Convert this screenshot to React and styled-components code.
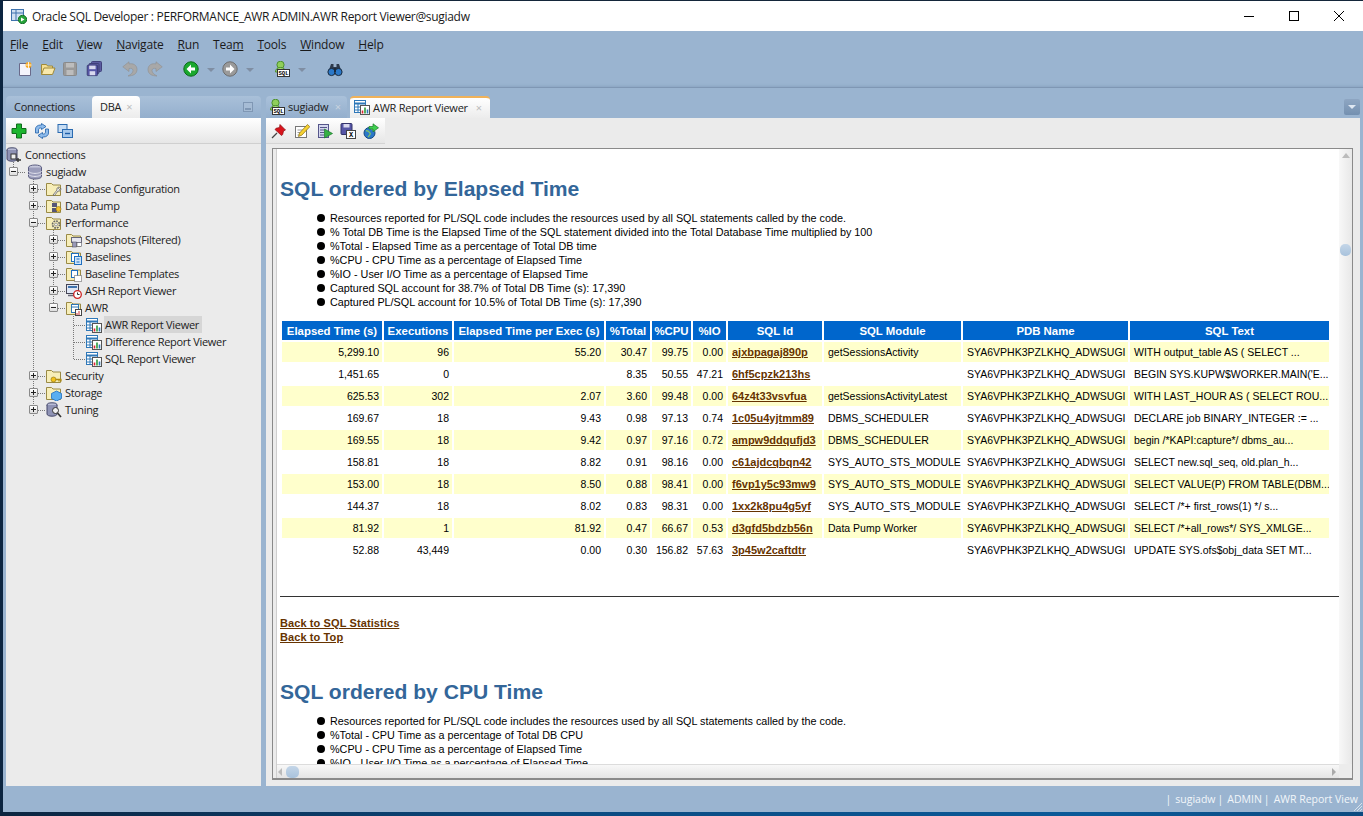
import React from 'react';
import styled, { createGlobalStyle } from 'styled-components';

const GlobalStyle = createGlobalStyle`
  html, body { margin: 0; padding: 0; background: #0b2239; overflow: hidden; }
  * { box-sizing: border-box; }
`;

const uiFont = `"Open Sans", "Noto Sans", "Liberation Sans", sans-serif`;
const reportFont = `"Liberation Sans", Arial, sans-serif`;

const Window = styled.div`
  width: 1363px; height: 816px;
  display: flex; flex-direction: column;
  background: #9ab4d0;
  border-top: 1px solid #14263a;
  border-left: 3px solid #0c2540;
  font-family: ${uiFont};
  overflow: hidden;
`;
const TitleBar = styled.div`
  height: 30px; flex: none; background: #fff;
  display: flex; align-items: center;
  padding-left: 8px; gap: 5px;
  font-size: 12px; color: #1a1a1a;
`;
const TitleText = styled.span` flex: 1; letter-spacing: -0.31px; `;
const WinButtons = styled.div` display: flex; gap: 30px; padding-right: 16px; `;
const MenuBar = styled.div`
  height: 27px; flex: none; display: flex; align-items: center;
  padding: 0 0 0 7px; gap: 14px;
  font-size: 12px; color: #1a1a1a;
  letter-spacing: -0.2px;
`;
const ToolBar = styled.div`
  height: 30px; flex: none; display: flex; align-items: center;
  padding: 0 0 8px 14px;
  border-bottom: 1px solid #7f97b4;
  box-shadow: inset 0 -3px 3px -2px #8aa4c2;
`;
const ToolGap = styled.span` display: inline-block; width: ${p => p.$w}px; flex: none; `;
const Drop = styled.span`
  width: 0; height: 0; flex: none;
  border-left: 4px solid transparent; border-right: 4px solid transparent;
  border-top: 4px solid #7f8ea3;
  margin-top: 2px;
`;
const Workspace = styled.div`
  flex: 1; min-height: 0;
  display: flex; gap: 5px;
  padding: 8px 3px 0 3px;
`;
const LeftColumn = styled.div` width: 255px; display: flex; flex-direction: column; `;
const RightColumn = styled.div` flex: 1; min-width: 0; display: flex; flex-direction: column; `;
const TabStrip = styled.div`
  height: 22px; flex: none; display: flex; align-items: stretch;
  font-size: 11px; color: #222;
  ${p => p.$light && 'background: linear-gradient(#a9c0d9, #94afcd); border-radius: 4px 4px 0 0;'}
`;
const Tab = styled.div`
  display: flex; align-items: center; gap: ${p => p.$gap ?? 7}px;
  padding: ${p => p.$pad || '0 8px 1px'};
  width: ${p => p.$w}px;
  white-space: nowrap;
  border-radius: 4px 4px 0 0;
  background: ${p => p.$active ? 'linear-gradient(#fff, #ececec)' : 'transparent'};
  ${p => p.$orange && 'border-top: 2px solid #f0b25a;'}
  ${p => p.$bar && 'background: linear-gradient(#aac1da, #94afcd);'}
`;
const TabLabel = styled.span` letter-spacing: -0.25px; `;
const TabClose = styled.span`
  color: ${p => p.$dark ? '#bbb' : '#c8d3df'};
  font-size: 11px; line-height: 1; margin-left: auto;
`;
const Spacer = styled.div` flex: 1; `;
const MinBtn = styled.span`
  align-self: center; margin-right: 8px;
  width: 10px; height: 10px;
  border: 1px solid #7f97b4; background: #a6bcd5;
  display: flex; align-items: flex-end; justify-content: center;
  padding-bottom: 1px;
  &::after { content: ''; width: 6px; height: 2px; background: #7f97b4; }
`;
const DropBtn = styled.span`
  align-self: center; width: 16px; height: 16px; margin-top: -1px;
  border-radius: 2px;
  background: linear-gradient(#8ea6c2, #7490b0);
  display: flex; align-items: center; justify-content: center;
  &::after {
    content: ''; width: 0; height: 0;
    border-left: 4px solid transparent; border-right: 4px solid transparent;
    border-top: 4px solid #dfe8f2;
  }
`;
const Panel = styled.div`
  flex: 1; min-height: 0; background: #ebebeb;
  display: flex; flex-direction: column;
`;
const LeftBar = styled.div`
  height: 26px; flex: none; display: flex; align-items: center;
  gap: 7px; padding: 0 0 0 5px;
  background: linear-gradient(#fff, #e6e6e6);
  border-bottom: 1px solid #cfcfcf;
`;
const Tree = styled.div`
  position: relative; padding-top: 2px;
  font-size: 11px; color: #222;
`;
const TreeLines = styled.svg`
  position: absolute; left: 0; top: 0; pointer-events: none;
`;
const Row = styled.div`
  position: relative; height: 17px;
  display: flex; align-items: center;
  padding-left: ${p => p.$indent}px;
`;
const Expander = styled.span`
  width: 9px; height: 9px; flex: none; margin-right: ${p => p.$mr}px;
  border: 1px solid #8a8a8a; border-radius: 1px;
  background: linear-gradient(#fff, #ddd);
  position: relative;
  &::before { content: ''; position: absolute; left: 1px; right: 1px; top: 3px; height: 1px; background: #222; }
  ${p => p.$plus && `&::after { content: ''; position: absolute; top: 1px; bottom: 1px; left: 3px; width: 1px; background: #222; }`}
`;
const RowLabel = styled.span`
  margin-left: 2px; padding: 0 3px 0 1px; height: 17px; line-height: 17px;
  letter-spacing: -0.3px;
  ${p => p.$sel && 'background: #d6d6d6;'}
`;
const RightBar = styled.div`
  height: 26px; flex: none; display: flex;
`;
const RightTools = styled.div`
  width: 119px; display: flex; align-items: center; gap: 7px; padding-left: 5px;
  background: linear-gradient(#fff, #e6e6e6);
  border-bottom: 1px solid #d4d4d4;
`;
const Frame = styled.div`
  margin: 4px 7px 6px 6px;
  flex: 1; min-height: 0;
  display: grid;
  grid-template-columns: 4px 1fr 13px;
  grid-template-rows: 1fr 14px;
  border: 1px solid #8a8a8a;
  border-bottom-width: 2px;
  background: #fff;
`;
const Gutter = styled.div` background: #ececec; border-right: 1px solid #cfcfcf; grid-row: 1 / 3; `;
const Report = styled.div`
  overflow: hidden; padding: 28px 0 0 3px;
  font-family: ${reportFont}; font-size: 11px; color: #000;
`;
const VScroll = styled.div`
  position: relative;
  background: linear-gradient(90deg, #f8f8f8, #e8e8e8);
  display: flex; flex-direction: column; align-items: center; padding-top: 4px;
`;
const ScrollThumb = styled.span`
  position: absolute; width: ${p => p.$v ? 11 : 13}px; height: 12px; border-radius: 5px;
  background: linear-gradient(#c4d6e8, #a8c2dc);
  ${p => p.$v ? 'top: 95px; left: 1px;' : 'left: 9px; top: 1px;'}
`;
const HScroll = styled.div`
  position: relative;
  background: linear-gradient(#f8f8f8, #e4e4e4);
  border-top: 1px solid #dcdcdc;
  display: flex; align-items: center; justify-content: space-between;
  padding: 0 3px 0 1px;
`;
const Corner = styled.div` background: #ececec; `;
const Arrow = styled.span`
  width: 0; height: 0; display: block;
  ${p => p.$dir === 'up' && 'border-left: 4px solid transparent; border-right: 4px solid transparent; border-bottom: 5px solid #bbb;'}
  ${p => p.$dir === 'left' && 'border-top: 4px solid transparent; border-bottom: 4px solid transparent; border-right: 4px solid #bbb;'}
  ${p => p.$dir === 'right' && 'border-top: 4px solid transparent; border-bottom: 4px solid transparent; border-left: 4px solid #aaa;'}
`;
const Heading = styled.h1`
  margin: ${p => p.$mt || 0}px 0 0; font-size: 21.1px; line-height: 24px;
  font-weight: bold; color: #336699;
`;
const Notes = styled.ul`
  list-style: none; margin: 10px 0 0; padding: 0 0 0 50px;
  font-size: 10.8px; line-height: 14px;
`;
const Note = styled.li`
  position: relative;
  &::before {
    content: ''; position: absolute; left: -13px; top: 3px;
    width: 8px; height: 8px; border-radius: 50%; background: #000;
  }
`;
const Table = styled.table`
  margin-top: 10px; width: 1051px; table-layout: fixed;
  border-collapse: separate; border-spacing: 2px;
  font-size: 10.5px;
`;
const Th = styled.th`
  height: 19px; padding: 0 1px; background: #0066cc; color: #fff;
  font-size: 11.4px;
  font-weight: bold; text-align: center; white-space: nowrap; overflow: hidden;
`;
const Td = styled.td`
  height: 20px; padding: ${p => p.$num ? '0 3px' : '0 1px 0 4px'}; white-space: nowrap; overflow: hidden;
  background: ${p => p.$odd ? '#ffffcc' : '#fff'};
  text-align: ${p => p.$num ? 'right' : 'left'};
`;
const SqlLink = styled.a`
  color: #663300; font-weight: bold; text-decoration: underline; font-size: 11px;
`;
const Rule = styled.hr`
  margin: 34px 0 0; border: 0; border-top: 1px solid #333; height: 1px;
`;
const BackLinks = styled.div`
  margin-top: 19px; display: flex; flex-direction: column; align-items: flex-start;
  line-height: 14px; letter-spacing: 0.1px;
`;
const StatusBar = styled.div`
  height: 26px; flex: none; display: flex; align-items: center; justify-content: flex-end;
  font-size: 10.5px; color: #f2f6fa; padding-right: 5px;
  position: relative;
`;
const StatusSep = styled.span` margin: 0 4px 0 2px; `;
const Grip = styled.svg` position: absolute; right: 0; bottom: 0; `;
const Taskbar = styled.div`
  height: 4px; flex: none;
  background: linear-gradient(90deg, #0c2540, #0b4a80 40%, #0b5a99 80%, #0c4a80);
`;

// --- drawings ---
const Svg = ({ children, s = 16 }) => (
  <svg width={s} height={s} viewBox="0 0 16 16" style={{ flex: 'none', display: 'block' }}>{children}</svg>
);

const WinMin = () => <svg width="15" height="12" style={{ display: 'block' }}><path d="M2 6.5h10" stroke="#000" /></svg>;
const WinMax = () => <svg width="15" height="12" style={{ display: 'block' }}><rect x="2.5" y="1.5" width="9" height="9" fill="none" stroke="#000" /></svg>;
const WinClose = () => <svg width="15" height="12" style={{ display: 'block' }}><path d="M2 1l10 10M12 1L2 11" stroke="#000" /></svg>;

const ReportGlyph = () => (
  <Svg>
    <rect x="0.5" y="1.5" width="11" height="12" fill="#fff" stroke="#2f78b8" />
    <path d="M0.5 4.5h11" stroke="#2f78b8" strokeWidth="2" />
    <path d="M0.5 8h11M0.5 11h11M4 4v9" stroke="#2f78b8" />
    <rect x="6.5" y="6.5" width="9" height="9" fill="#fff" stroke="#555" />
    <path d="M8.5 14.5v-3" stroke="#d23" strokeWidth="1.6" />
    <path d="M11 14.5v-6" stroke="#2a9a3a" strokeWidth="1.6" />
    <path d="M13.5 14.5v-4" stroke="#2f78b8" strokeWidth="1.6" />
  </Svg>
);
const AppIcon = () => (
  <Svg>
    <rect x="0.5" y="1.5" width="12" height="11" fill="#cfe0f2" stroke="#3f73ad" />
    <path d="M0.5 5h12M5 1.5v11" stroke="#3f73ad" />
    <circle cx="11.5" cy="11.5" r="4.2" fill="#27a33a" stroke="#17702a" />
    <path d="M10 9.5l3.5 2-3.5 2z" fill="#fff" />
  </Svg>
);
const NewFile = () => (
  <Svg>
    <path d="M2.5 2.5h8l3 3v9h-11z" fill="#f4f4fb" stroke="#6a6a8a" />
    <circle cx="11.5" cy="4" r="3" fill="#f7a81e" />
    <path d="M11.5 1v6M8.5 4h6" stroke="#fff" strokeWidth="0.8" />
  </Svg>
);
const OpenFolder = () => (
  <Svg>
    <path d="M1.5 13.5v-10h5l1 1.5h5v2" fill="#f5df93" stroke="#a08a3a" />
    <path d="M1.5 13.5l2.5-6.5h11l-2.5 6.5z" fill="#f9e9ac" stroke="#a08a3a" />
  </Svg>
);
const Disk = ({ c = '#9a9a9a', b = '#8a8a8a', l = '#bdbdbd' }) => (
  <>
    <rect x="1.5" y="1.5" width="13" height="13" rx="1" fill={c} stroke={b} />
    <rect x="4" y="2" width="8" height="4.5" fill={l} />
    <rect x="4.5" y="9" width="7" height="5" fill={l} />
  </>
);
const SaveIcon = () => <Svg><Disk /></Svg>;
const SaveAllIcon = () => (
  <Svg>
    <rect x="5.5" y="0.5" width="10" height="10" rx="1" fill="#5b5ba0" stroke="#40407a" />
    <rect x="3" y="2.5" width="10" height="10" rx="1" fill="#5b5ba0" stroke="#40407a" />
    <g transform="translate(0 3) scale(0.8)"><Disk c="#5656a6" b="#33336a" l="#d8d8ee" /></g>
  </Svg>
);
const UndoIcon = ({ flip }) => (
  <Svg>
    <g transform={flip ? 'translate(16 0) scale(-1 1)' : undefined}>
      <path d="M6 15c5 0 9-2 9-6.500S11 2 7 3V.8L.8 5.800 7 10.500V7.500c2-.5 4 0 4 2s-2 4-5 5.500z" fill="#a8a8a8" stroke="#8f8f8f" strokeWidth="0.6" />
    </g>
  </Svg>
);
const NavCircle = ({ c = '#1aa82e', d = '#0b6a18', right }) => (
  <Svg>
    <circle cx="8" cy="8" r="7.2" fill={c} stroke={d} />
    <path d={right ? 'M4 6.5h4v-3l4.5 4.5L8 12.5v-3H4z' : 'M12 6.5H8v-3L3.5 8 8 12.5v-3h4z'} fill="#fff" />
  </Svg>
);
const SqlIcon = () => (
  <Svg>
    <circle cx="6.5" cy="3.8" r="3.6" fill="#8fce5a" stroke="#4c8f2e" />
    <path d="M1.5 11c0-3 2-4.5 5-4.5s5 1.500 5 4.500z" fill="#a7d878" stroke="#4c8f2e" />
    <rect x="3.5" y="8.5" width="12" height="7" fill="#fff" stroke="#333" />
    <text x="9.5" y="14.4" fontSize="5.6" fontWeight="bold" fontFamily="Liberation Mono, monospace" textAnchor="middle" fill="#000">SQL</text>
  </Svg>
);
const Binoculars = () => (
  <Svg>
    <path d="M2 9l2-6h2.500v3h3V3H12l2 6z" fill="#2e3a4c" />
    <circle cx="4.5" cy="11" r="3.6" fill="#2b78c8" stroke="#1b2a3c" />
    <circle cx="11.5" cy="11" r="3.6" fill="#2b78c8" stroke="#1b2a3c" />
    <rect x="7" y="7" width="2" height="4" fill="#1b2a3c" />
  </Svg>
);
const PlusGreen = () => (
  <Svg>
    <path d="M5.500 1h5v4.500H15v5h-4.500V15h-5v-4.500H1v-5h4.500z" fill="#1cb52f" stroke="#0f6c1c" />
  </Svg>
);
const RefreshArrow = () => (
  <path d="M1.500 10V6c0-2.200 2-4 5-4h1V.5l4.500 3-4.500 3V5h-1C5 5 4.500 6 4.500 7v3z" fill="#8fbcec" stroke="#1f5fa8" strokeWidth="0.8" />
);
const RefreshBlue = () => (
  <Svg>
    <RefreshArrow />
    <g transform="rotate(180 8 8)"><RefreshArrow /></g>
  </Svg>
);
const CollapseBlue = () => (
  <Svg>
    <rect x="1" y="1.5" width="9" height="8" fill="#c8ddf3" stroke="#2a6ab0" />
    <rect x="5.5" y="6.5" width="10" height="8" fill="#a7c9ec" stroke="#2a6ab0" />
    <path d="M8 10.500h5" stroke="#1f5fa8" strokeWidth="1.4" />
  </Svg>
);
const Pin = () => (
  <Svg>
    <path d="M1 15l5-5" stroke="#444" strokeWidth="1.2" />
    <path d="M9 1.500l5.500 5.500-2 1-.8 3.500-1.200 1L4 6.500l1-1.200 3.500-.8z" fill="#d8141c" stroke="#8c0d12" strokeWidth="0.7" />
  </Svg>
);
const Pencil = () => (
  <Svg>
    <rect x="1.500" y="3.500" width="11" height="11" fill="#fff" stroke="#777" />
    <path d="M3.500 7h6M3.500 9.500h4M3.500 12h3" stroke="#999" />
    <path d="M4.500 13.500l1-3.500 8-8.500 2.300 2.200-8 8.500z" fill="#f6d232" stroke="#8a6d10" strokeWidth="0.7" />
  </Svg>
);
const DocRun = () => (
  <Svg>
    <rect x="1.500" y="1.500" width="10" height="13" fill="#d5d8ee" stroke="#55558a" />
    <path d="M3 4.500h7M3 7h4M3 9.500h4M3 12h4" stroke="#55558a" />
    <path d="M7.500 6l8 4.500-8 4.500z" fill="#35b045" stroke="#1a7a2a" strokeWidth="0.7" />
  </Svg>
);
const SaveX = () => (
  <Svg>
    <rect x="1" y="0.500" width="11" height="11" rx="1" fill="#5656a6" stroke="#33336a" />
    <rect x="3.500" y="1" width="6" height="3.500" fill="#d8d8ee" />
    <rect x="6.500" y="7.500" width="9" height="8" fill="#fff" stroke="#444" />
    <text x="11" y="14" fontSize="7" fontWeight="bold" fontFamily="Liberation Mono, monospace" textAnchor="middle" fill="#000">X</text>
  </Svg>
);
const GlobeArrow = () => (
  <Svg>
    <circle cx="6.500" cy="10" r="5.500" fill="#2b78c8" stroke="#17497f" />
    <path d="M3 8c2-1 3 1 4 2s-1 3-2 4M8 5.500c1 1 3 1 3 3" stroke="#7fc36a" strokeWidth="1.400" fill="none" />
    <path d="M6 3.500h4V.8l5.500 4-5.500 4V6H6z" fill="#3fcf4f" stroke="#1a7a2a" strokeWidth="0.7" />
  </Svg>
);
const ConnectionsIcon = () => (
  <Svg>
    <ellipse cx="6" cy="3" rx="5" ry="2.200" fill="#b9bdd6" stroke="#44476a" />
    <path d="M1 3v9c0 1.300 2.200 2.200 5 2.200s5-.9 5-2.200V3" fill="#8f93b5" stroke="#44476a" />
    <rect x="5" y="7" width="5" height="5" fill="#f0f0f0" stroke="#333" />
    <path d="M12 11v4M10 13h5" stroke="#333" strokeWidth="1.400" />
  </Svg>
);
const DbIcon = () => (
  <Svg>
    <ellipse cx="8" cy="3.400" rx="6.500" ry="2.400" fill="#c6c8dc" stroke="#5a5c80" />
    <path d="M1.500 3.400v9.200c0 1.300 3 2.400 6.500 2.400s6.500-1.100 6.500-2.400V3.400" fill="#9b9dbb" stroke="#5a5c80" />
    <path d="M1.500 7c0 1.300 3 2.400 6.500 2.400S14.500 8.300 14.500 7M1.500 10c0 1.300 3 2.400 6.500 2.400s6.500-1.100 6.500-2.400" fill="none" stroke="#e6e6f0" />
  </Svg>
);
const FolderBase = ({ children }) => (
  <Svg>
    <path d="M0.500 14.500V2.500h5l1.500 1.500h7.500v10.500z" fill="#f7eeb9" stroke="#9a8a45" />
    {children}
  </Svg>
);
const folderOverlays = {
  wrench: <path d="M7 14l4-5c-.6-1.500.5-3 2.500-3l-1 1.500 1 1 1.500-1c0 2-1.500 3-3 2.500l-3.500 4.500z" fill="#eee" stroke="#555" strokeWidth="0.7" />,
  pump: <g><rect x="6" y="5" width="5" height="4" fill="#557" /><rect x="6" y="10" width="5" height="4" fill="#557" /><circle cx="12.500" cy="11" r="2.500" fill="#f3c12e" stroke="#8a6d10" strokeWidth="0.6" /></g>,
  gear: <g><circle cx="10" cy="9.500" r="3.500" fill="none" stroke="#666" strokeWidth="1.600" strokeDasharray="1.800 0.900" /><circle cx="10" cy="9.500" r="1.500" fill="#eee" stroke="#666" strokeWidth="0.6" /></g>,
  snap: <g><rect x="5.500" y="5.500" width="10" height="5" fill="#e6e6f0" stroke="#667" /><rect x="6.500" y="10" width="4" height="5" fill="#9a9ab8" stroke="#556" strokeWidth="0.6" /><rect x="11" y="10.500" width="4.500" height="4" fill="#fff" stroke="#556" strokeWidth="0.6" /></g>,
  base: <g><rect x="5.500" y="4.500" width="7" height="8" fill="#fff" stroke="#1f6fc0" /><rect x="8.500" y="7.500" width="7" height="8" fill="#cfe4f8" stroke="#1f6fc0" /><path d="M10.500 10h3M10.500 13h3" stroke="#1f6fc0" /></g>,
  tmpl: <g><rect x="5.500" y="4.500" width="6" height="7" fill="#fff" stroke="#1f6fc0" /><rect x="8.500" y="9.500" width="7" height="6" fill="#fff" stroke="#555" strokeDasharray="1 1" /></g>,
  report: <g><rect x="5.500" y="4.500" width="7" height="8" fill="#fff" stroke="#2f78b8" /><path d="M5.500 7h7" stroke="#2f78b8" /><rect x="9.500" y="9.500" width="6" height="6" fill="#fff" stroke="#444" /><path d="M11 15v-2M13 15v-4" stroke="#c33" /></g>,
  key: <g><circle cx="7.500" cy="11.500" r="2.500" fill="#f2c21d" stroke="#8a6d10" strokeWidth="0.6" /><path d="M9.500 11.500h6M13 11.500v2M15 11.500v2" stroke="#b08c12" strokeWidth="1.300" /></g>,
  box: <path d="M10.500 6l5 2.500v5l-5 2.500-5-2.500v-5z" fill="#59aef0" stroke="#1f6fc0" strokeWidth="0.8" />,
};
const TreeIcon = ({ kind }) => {
  if (kind === 'conn') return <ConnectionsIcon />;
  if (kind === 'db') return <DbIcon />;
  if (kind === 'doc') return <ReportGlyph />;
  if (kind === 'ash') return (
    <Svg>
      <rect x="0.500" y="1.500" width="12" height="9" fill="#dfe6f3" stroke="#445" />
      <rect x="2" y="3" width="9" height="2" fill="#3f73ad" />
      <path d="M2 12.500h8" stroke="#667" strokeWidth="1.500" />
      <circle cx="11.500" cy="11.500" r="3.800" fill="#fff" stroke="#c22" strokeWidth="1.300" />
      <path d="M11.500 9.500v2h2" stroke="#333" fill="none" />
    </Svg>
  );
  if (kind === 'tune') return (
    <Svg>
      <ellipse cx="6" cy="3" rx="5" ry="2.200" fill="#b9bdd6" stroke="#44476a" />
      <path d="M1 3v9c0 1.300 2.200 2.200 5 2.200s5-.9 5-2.200V3" fill="#8f93b5" stroke="#44476a" />
      <circle cx="9.500" cy="8.500" r="3" fill="#f0f0f0" stroke="#333" />
      <path d="M11.500 11l3.500 4" stroke="#333" strokeWidth="1.600" />
    </Svg>
  );
  return <FolderBase>{folderOverlays[kind]}</FolderBase>;
};

const treeRows = [
  { label: 'Connections', kind: 'conn', indent: 0 },
  { label: 'sugiadw', kind: 'db', indent: 3, exp: 'minus', mr: 9 },
  { label: 'Database Configuration', kind: 'wrench', indent: 23, exp: 'plus', mr: 8 },
  { label: 'Data Pump', kind: 'pump', indent: 23, exp: 'plus', mr: 8 },
  { label: 'Performance', kind: 'gear', indent: 23, exp: 'minus', mr: 8 },
  { label: 'Snapshots (Filtered)', kind: 'snap', indent: 43, exp: 'plus', mr: 8 },
  { label: 'Baselines', kind: 'base', indent: 43, exp: 'plus', mr: 8 },
  { label: 'Baseline Templates', kind: 'tmpl', indent: 43, exp: 'plus', mr: 8 },
  { label: 'ASH Report Viewer', kind: 'ash', indent: 43, exp: 'plus', mr: 8 },
  { label: 'AWR', kind: 'report', indent: 43, exp: 'minus', mr: 8 },
  { label: 'AWR Report Viewer', kind: 'doc', indent: 80, sel: true },
  { label: 'Difference Report Viewer', kind: 'doc', indent: 80 },
  { label: 'SQL Report Viewer', kind: 'doc', indent: 80 },
  { label: 'Security', kind: 'key', indent: 23, exp: 'plus', mr: 8 },
  { label: 'Storage', kind: 'box', indent: 23, exp: 'plus', mr: 8 },
  { label: 'Tuning', kind: 'tune', indent: 23, exp: 'plus', mr: 8 },
];

const menus = [
  ['F', 'ile'], ['E', 'dit'], ['V', 'iew'], ['N', 'avigate'], ['R', 'un'],
  ['Tea', 'm', true], ['T', 'ools'], ['W', 'indow'], ['H', 'elp'],
];

const columns = [
  ['Elapsed Time (s)', 100], ['Executions', 68], ['Elapsed Time per Exec (s)', 150],
  ['%Total', 44], ['%CPU', 39], ['%IO', 33], ['SQL Id', 94], ['SQL Module', 137],
  ['PDB Name', 165], ['SQL Text', 199],
];

const PDB = 'SYA6VPHK3PZLKHQ_ADWSUGI';
const sqlRows = [
  ['5,299.10', '96', '55.20', '30.47', '99.75', '0.00', 'ajxbpagaj890p', 'getSessionsActivity', 'WITH output_table AS ( SELECT ...'],
  ['1,451.65', '0', '', '8.35', '50.55', '47.21', '6hf5cpzk213hs', '', "BEGIN SYS.KUPW$WORKER.MAIN('E..."],
  ['625.53', '302', '2.07', '3.60', '99.48', '0.00', '64z4t33vsvfua', 'getSessionsActivityLatest', 'WITH LAST_HOUR AS ( SELECT ROU...'],
  ['169.67', '18', '9.43', '0.98', '97.13', '0.74', '1c05u4yjtmm89', 'DBMS_SCHEDULER', 'DECLARE job BINARY_INTEGER := ...'],
  ['169.55', '18', '9.42', '0.97', '97.16', '0.72', 'ampw9ddqufjd3', 'DBMS_SCHEDULER', 'begin /*KAPI:capture*/ dbms_au...'],
  ['158.81', '18', '8.82', '0.91', '98.16', '0.00', 'c61ajdcqbqn42', 'SYS_AUTO_STS_MODULE', 'SELECT new.sql_seq, old.plan_h...'],
  ['153.00', '18', '8.50', '0.88', '98.41', '0.00', 'f6vp1y5c93mw9', 'SYS_AUTO_STS_MODULE', 'SELECT VALUE(P) FROM TABLE(DBM...'],
  ['144.37', '18', '8.02', '0.83', '98.31', '0.00', '1xx2k8pu4g5yf', 'SYS_AUTO_STS_MODULE', 'SELECT /*+ first_rows(1) */ s...'],
  ['81.92', '1', '81.92', '0.47', '66.67', '0.53', 'd3gfd5bdzb56n', 'Data Pump Worker', 'SELECT /*+all_rows*/ SYS_XMLGE...'],
  ['52.88', '43,449', '0.00', '0.30', '156.82', '57.63', '3p45w2caftdtr', '', 'UPDATE SYS.ofs$obj_data SET MT...'],
];

const elapsedNotes = [
  'Resources reported for PL/SQL code includes the resources used by all SQL statements called by the code.',
  '% Total DB Time is the Elapsed Time of the SQL statement divided into the Total Database Time multiplied by 100',
  '%Total - Elapsed Time as a percentage of Total DB time',
  '%CPU - CPU Time as a percentage of Elapsed Time',
  '%IO - User I/O Time as a percentage of Elapsed Time',
  'Captured SQL account for 38.7% of Total DB Time (s): 17,390',
  'Captured PL/SQL account for 10.5% of Total DB Time (s): 17,390',
];
const cpuNotes = [
  'Resources reported for PL/SQL code includes the resources used by all SQL statements called by the code.',
  '%Total - CPU Time as a percentage of Total DB CPU',
  '%CPU - CPU Time as a percentage of Elapsed Time',
  '%IO - User I/O Time as a percentage of Elapsed Time',
];

export default function App() {
  return (
    <Window>
      <GlobalStyle />
      <TitleBar>
        <AppIcon />
        <TitleText>Oracle SQL Developer : PERFORMANCE_AWR ADMIN.AWR Report Viewer@sugiadw</TitleText>
        <WinButtons><WinMin /><WinMax /><WinClose /></WinButtons>
      </TitleBar>
      <MenuBar>
        {menus.map(([a, b, second]) => (
          <span key={a + b}>{second ? <>{a}<u>{b}</u></> : <><u>{a}</u>{b}</>}</span>
        ))}
      </MenuBar>
      <ToolBar>
        <NewFile /><ToolGap $w={7} /><OpenFolder /><ToolGap $w={6} /><SaveIcon /><ToolGap $w={8} /><SaveAllIcon />
        <ToolGap $w={20} /><UndoIcon /><ToolGap $w={9} /><UndoIcon flip />
        <ToolGap $w={20} /><NavCircle /><ToolGap $w={8} /><Drop /><ToolGap $w={7} />
        <NavCircle c="#9a9a9a" d="#6d6d6d" right /><ToolGap $w={8} /><Drop /><ToolGap $w={20} />
        <SqlIcon /><ToolGap $w={8} /><Drop /><ToolGap $w={21} /><Binoculars />
      </ToolBar>
      <Workspace>
        <LeftColumn>
          <TabStrip $light>
            <Tab $w={86}><TabLabel>Connections</TabLabel></Tab>
            <Tab $active $w={48} $gap={5}><TabLabel>DBA</TabLabel><TabClose $dark>×</TabClose></Tab>
            <Spacer />
            <MinBtn />
          </TabStrip>
          <Panel>
            <LeftBar><PlusGreen /><RefreshBlue /><CollapseBlue /></LeftBar>
            <Tree>
              <TreeLines width="255" height="300">
                <g stroke="#777" strokeDasharray="1 1" fill="none">
                  <path d="M7.500 12v12" />
                  <path d="M12 28.500h8M27.500 33v240M32 45.500h8M32 62.500h8M32 79.500h8M32 232.500h8M32 249.500h8M32 266.500h8" />
                  <path d="M47.500 84v80M52 96.500h8M52 113.500h8M52 130.500h8M52 147.500h8M52 164.500h8" />
                  <path d="M67.500 170v46M68 181.500h12M68 198.500h12M68 215.500h12" />
                </g>
              </TreeLines>
              {treeRows.map(r => (
                <Row key={r.label} $indent={r.indent}>
                  {r.exp && <Expander $plus={r.exp === 'plus'} $mr={r.mr} />}
                  <TreeIcon kind={r.kind} />
                  <RowLabel $sel={r.sel}>{r.label}</RowLabel>
                </Row>
              ))}
            </Tree>
          </Panel>
        </LeftColumn>
        <RightColumn>
          <TabStrip>
            <Tab $bar $w={81} $pad="0 6px 1px 3px" $gap={3}><SqlIcon /><TabLabel>sugiadw</TabLabel><TabClose>×</TabClose></Tab>
            <ToolGap $w={3} />
            <Tab $active $orange $w={140} $pad="0 8px 2px 4px" $gap={3}><ReportGlyph /><TabLabel>AWR Report Viewer</TabLabel><TabClose $dark>×</TabClose></Tab>
            <Spacer />
            <DropBtn />
          </TabStrip>
          <Panel>
            <RightBar>
              <RightTools><Pin /><Pencil /><DocRun /><SaveX /><GlobeArrow /></RightTools>
            </RightBar>
            <Frame>
              <Gutter />
              <Report>
                <Heading>SQL ordered by Elapsed Time</Heading>
                <Notes>{elapsedNotes.map(n => <Note key={n}>{n}</Note>)}</Notes>
                <Table>
                  <colgroup>{columns.map(([name, w]) => <col key={name} width={w} />)}</colgroup>
                  <thead>
                    <tr>{columns.map(([name]) => <Th key={name}>{name}</Th>)}</tr>
                  </thead>
                  <tbody>
                    {sqlRows.map((r, i) => (
                      <tr key={r[6]}>
                        {r.slice(0, 6).map((v, j) => <Td key={j} $num $odd={i % 2 === 0}>{v}</Td>)}
                        <Td $odd={i % 2 === 0}><SqlLink href="#">{r[6]}</SqlLink></Td>
                        <Td $odd={i % 2 === 0}>{r[7]}</Td>
                        <Td $odd={i % 2 === 0}>{PDB}</Td>
                        <Td $odd={i % 2 === 0}>{r[8]}</Td>
                      </tr>
                    ))}
                  </tbody>
                </Table>
                <Rule />
                <BackLinks>
                  <SqlLink href="#">Back to SQL Statistics</SqlLink>
                  <SqlLink href="#">Back to Top</SqlLink>
                </BackLinks>
                <Heading $mt={36}>SQL ordered by CPU Time</Heading>
                <Notes>{cpuNotes.map(n => <Note key={n}>{n}</Note>)}</Notes>
              </Report>
              <VScroll><Arrow $dir="up" /><ScrollThumb $v /></VScroll>
              <HScroll><Arrow $dir="left" /><ScrollThumb /><Arrow $dir="right" /></HScroll>
              <Corner />
            </Frame>
          </Panel>
        </RightColumn>
      </Workspace>
      <StatusBar>
        <StatusSep>|</StatusSep><span>sugiadw</span>
        <StatusSep>|</StatusSep><span>ADMIN</span>
        <StatusSep>|</StatusSep><span>AWR Report View</span>
        <Grip width="10" height="10"><path d="M9 1L1 9M9 4L4 9M9 7L7 9" stroke="#d8e2ec" /></Grip>
      </StatusBar>
      <Taskbar />
    </Window>
  );
}
